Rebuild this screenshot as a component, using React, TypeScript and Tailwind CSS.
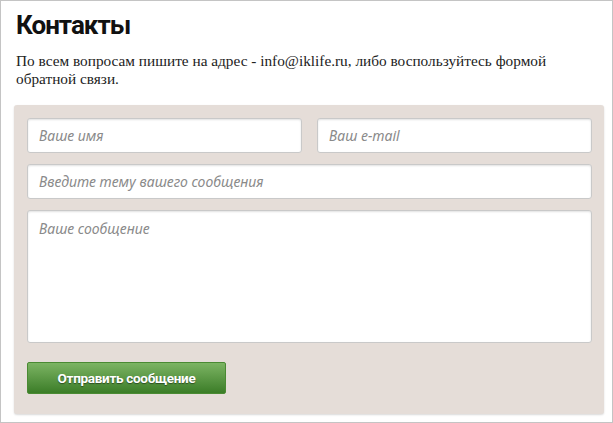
import React from "react";

const fieldClass =
  "h-[35px] w-full rounded-[3px] border border-[#c9c9c9] bg-white px-[11px] text-[14px] italic text-[#444] shadow-[inset_0_1px_2px_rgba(0,0,0,0.12)] outline-none placeholder:text-[#8a8a8a] [font-family:'Noto_Sans',sans-serif]";

const App: React.FC = () => {
  return (
    <div className="h-[423px] w-[613px] border border-[#c4c4c4] bg-white pl-[13px] pt-[7px]">
      <h1 className="ml-[2px] text-[26px] font-bold leading-[34px] tracking-[-1px] text-[#111] [font-family:Roboto,sans-serif]">
        Контакты
      </h1>
      <p className="ml-[2px] mt-[10px] w-[582px] text-[15.3px] leading-[18px] text-[#222] [font-family:'Liberation_Serif',serif]">
        По всем вопросам пишите на адрес - info@iklife.ru, либо воспользуйтесь
        формой обратной связи.
      </p>

      <form className="mt-[17px] w-[590px] rounded-[3px] bg-[#e5ddd8] pb-[20px] pl-[13px] pr-[12px] pt-[13px] shadow-[0_1px_2px_rgba(0,0,0,0.15)]">
        <div className="grid grid-cols-2 gap-[15px]">
          <input type="text" placeholder="Ваше имя" className={fieldClass} />
          <input type="text" placeholder="Ваш e-mail" className={fieldClass} />
        </div>
        <input
          type="text"
          placeholder="Введите тему вашего сообщения"
          className={`${fieldClass} mt-[11px]`}
        />
        <textarea
          placeholder="Ваше сообщение"
          className="mt-[11px] block h-[133px] w-full resize-none rounded-[3px] border border-[#c9c9c9] bg-white px-[11px] py-[7px] text-[14px] italic text-[#444] shadow-[inset_0_1px_2px_rgba(0,0,0,0.12)] outline-none placeholder:text-[#8a8a8a] [font-family:'Noto_Sans',sans-serif]"
        />
        <button
          type="button"
          className="mt-[19px] block h-[32px] w-[199px] rounded-[2px] border border-[#4a8a33] bg-gradient-to-b from-[#7cb463] to-[#3b7d27] text-[13.5px] font-bold tracking-[-0.3px] text-white [text-shadow:0_1px_1px_rgba(0,0,0,0.45)] [font-family:Roboto,sans-serif]"
        >
          Отправить сообщение
        </button>
      </form>
    </div>
  );
};

export default App;
